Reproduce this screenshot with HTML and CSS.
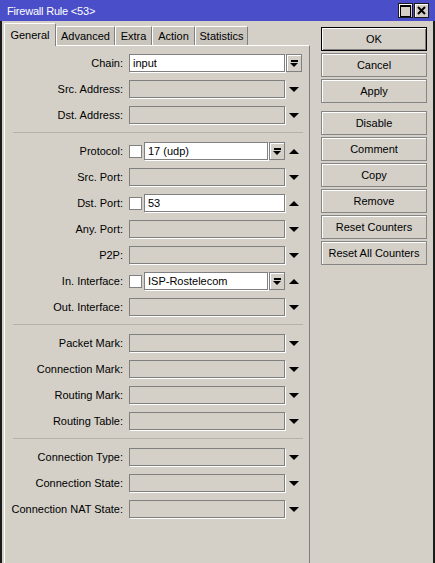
FILE: index.html
```html
<!DOCTYPE html>
<html lang="en">
<head>
    <meta charset="UTF-8">
    <title>Firewall Rule &lt;53&gt;</title>
    <link rel="stylesheet" href="styles.css">
</head>
<body>
    <div class="window">
        <div class="titlebar">
            <span class="title">Firewall Rule &lt;53&gt;</span>
            <div class="title-btns">
                <span class="tbtn tmax"></span>
                <span class="tbtn">
                    <svg width="9" height="9" viewBox="0 0 9 9"><path d="M1 1L8 8M8 1L1 8" stroke="#000" stroke-width="2"/></svg>
                </span>
            </div>
        </div>

        <div class="main">
            <div class="left">
                <div class="tabs">
                    <div class="tab active" style="width:52px">General</div>
                    <div class="tab" style="width:59px">Advanced</div>
                    <div class="tab" style="width:37px">Extra</div>
                    <div class="tab" style="width:43px">Action</div>
                    <div class="tab" style="width:53px">Statistics</div>
                </div>

                <div class="panel">
                    <div class="row">
                        <span class="lbl">Chain:</span>
                        <div class="ctrl"><div class="field on">input</div></div>
                        <div class="tail"><span class="dd"></span></div>
                    </div>
                    <div class="row">
                        <span class="lbl">Src. Address:</span>
                        <div class="ctrl"><div class="field"></div></div>
                        <div class="tail"><span class="down"></span></div>
                    </div>
                    <div class="row">
                        <span class="lbl">Dst. Address:</span>
                        <div class="ctrl"><div class="field"></div></div>
                        <div class="tail"><span class="down"></span></div>
                    </div>

                    <div class="sep"></div>

                    <div class="row">
                        <span class="lbl">Protocol:</span>
                        <div class="ctrl"><span class="chk"></span><div class="field on">17 (udp)</div><span class="dd"></span></div>
                        <div class="tail"><span class="up"></span></div>
                    </div>
                    <div class="row">
                        <span class="lbl">Src. Port:</span>
                        <div class="ctrl"><div class="field"></div></div>
                        <div class="tail"><span class="down"></span></div>
                    </div>
                    <div class="row">
                        <span class="lbl">Dst. Port:</span>
                        <div class="ctrl"><span class="chk"></span><div class="field on">53</div></div>
                        <div class="tail"><span class="up"></span></div>
                    </div>
                    <div class="row">
                        <span class="lbl">Any. Port:</span>
                        <div class="ctrl"><div class="field"></div></div>
                        <div class="tail"><span class="down"></span></div>
                    </div>
                    <div class="row">
                        <span class="lbl">P2P:</span>
                        <div class="ctrl"><div class="field"></div></div>
                        <div class="tail"><span class="down"></span></div>
                    </div>
                    <div class="row">
                        <span class="lbl">In. Interface:</span>
                        <div class="ctrl"><span class="chk"></span><div class="field on">ISP-Rostelecom</div><span class="dd"></span></div>
                        <div class="tail"><span class="up"></span></div>
                    </div>
                    <div class="row">
                        <span class="lbl">Out. Interface:</span>
                        <div class="ctrl"><div class="field"></div></div>
                        <div class="tail"><span class="down"></span></div>
                    </div>

                    <div class="sep"></div>

                    <div class="row">
                        <span class="lbl">Packet Mark:</span>
                        <div class="ctrl"><div class="field"></div></div>
                        <div class="tail"><span class="down"></span></div>
                    </div>
                    <div class="row">
                        <span class="lbl">Connection Mark:</span>
                        <div class="ctrl"><div class="field"></div></div>
                        <div class="tail"><span class="down"></span></div>
                    </div>
                    <div class="row">
                        <span class="lbl">Routing Mark:</span>
                        <div class="ctrl"><div class="field"></div></div>
                        <div class="tail"><span class="down"></span></div>
                    </div>
                    <div class="row">
                        <span class="lbl">Routing Table:</span>
                        <div class="ctrl"><div class="field"></div></div>
                        <div class="tail"><span class="down"></span></div>
                    </div>

                    <div class="sep"></div>

                    <div class="row">
                        <span class="lbl">Connection Type:</span>
                        <div class="ctrl"><div class="field"></div></div>
                        <div class="tail"><span class="down"></span></div>
                    </div>
                    <div class="row">
                        <span class="lbl">Connection State:</span>
                        <div class="ctrl"><div class="field"></div></div>
                        <div class="tail"><span class="down"></span></div>
                    </div>
                    <div class="row">
                        <span class="lbl">Connection NAT State:</span>
                        <div class="ctrl"><div class="field"></div></div>
                        <div class="tail"><span class="down"></span></div>
                    </div>
                </div>
            </div>

            <div class="buttons">
                <div class="btn default">OK</div>
                <div class="btn">Cancel</div>
                <div class="btn">Apply</div>
                <div class="btn spaced">Disable</div>
                <div class="btn">Comment</div>
                <div class="btn">Copy</div>
                <div class="btn">Remove</div>
                <div class="btn">Reset Counters</div>
                <div class="btn">Reset All Counters</div>
            </div>
        </div>
    </div>
</body>
</html>
```

FILE: styles.css
```css
* {
    margin: 0;
    padding: 0;
    box-sizing: border-box;
}

body {
    font-family: "Liberation Sans", Arial, sans-serif;
    font-size: 11px;
    color: #000;
    background: #d4d0c8;
    width: 435px;
    height: 563px;
    overflow: hidden;
}

.window {
    width: 435px;
    height: 563px;
    display: flex;
    flex-direction: column;
}

/* title bar */
.titlebar {
    height: 21px;
    flex: none;
    background: #4a4ec8;
    color: #fff;
    display: flex;
    align-items: center;
    justify-content: space-between;
    padding: 0 6px 0 7px;
}

.title {
    letter-spacing: -0.2px;
}

.title-btns {
    display: flex;
    gap: 1px;
}

.tbtn {
    width: 15px;
    height: 15px;
    background: #d4d0c8;
    border: 1px solid #1a1a1a;
    box-shadow: inset 1px 1px #fff;
    display: flex;
    align-items: center;
    justify-content: center;
}

.tmax::after {
    content: '';
    width: 9px;
    height: 9px;
    border: 1px solid #000;
    border-top-width: 2px;
}

/* main area */
.main {
    flex: 1;
    display: flex;
    border-left: 2px solid #1c1c1c;
    border-right: 2px solid #1c1c1c;
    padding-left: 2px;
}

.left {
    width: 306px;
    display: flex;
    flex-direction: column;
}

.tabs {
    height: 24px;
    padding-top: 2px;
    display: flex;
    align-items: flex-end;
    position: relative;
    z-index: 1;
}

.tab {
    height: 19px;
    background: #c9c5bd;
    border-top: 1px solid #fff;
    border-left: 1px solid #fff;
    border-right: 1px solid #808080;
    display: flex;
    align-items: center;
    justify-content: center;
}

.tab.active {
    height: 23px;
    margin-bottom: -1px;
    background: #d4d0c8;
    padding-bottom: 1px;
}

.panel {
    flex: 1;
    border-top: 1px solid #fff;
    border-left: 1px solid #fff;
    border-right: 1px solid #808080;
    padding-top: 8px;
    display: flex;
    flex-direction: column;
    gap: 8px;
}

.row {
    height: 18px;
    display: flex;
    align-items: center;
}

.lbl {
    width: 118px;
    margin-right: 6px;
    text-align: right;
    white-space: nowrap;
}

.ctrl {
    width: 156px;
    height: 18px;
    display: flex;
    align-items: center;
}

.tail {
    width: 16px;
    height: 18px;
    margin-left: 1px;
    display: flex;
    align-items: center;
    justify-content: center;
}

.field {
    flex: 1;
    height: 18px;
    border: 1px solid #808080;
    box-shadow: 1px 1px 0 #fff;
    background: #d4d0c8;
    padding-left: 3px;
    line-height: 16px;
    white-space: nowrap;
    overflow: hidden;
}

.field.on {
    background: #fff;
}

.chk {
    width: 13px;
    height: 13px;
    flex: none;
    margin-right: 2px;
    background: #fff;
    border: 1px solid #808080;
}

.dd {
    width: 16px;
    height: 18px;
    flex: none;
    background: #d4d0c8;
    border: 1px solid #808080;
    box-shadow: inset 1px 1px #fff;
    display: flex;
    flex-direction: column;
    align-items: center;
    justify-content: center;
    gap: 1px;
}

.ctrl .dd {
    margin-left: 1px;
}

.dd::before {
    content: '';
    width: 7px;
    height: 2px;
    background: #000;
}

.dd::after {
    content: '';
    border-left: 4px solid transparent;
    border-right: 4px solid transparent;
    border-top: 4px solid #000;
}

.down {
    border-left: 5px solid transparent;
    border-right: 5px solid transparent;
    border-top: 5px solid #000;
}

.up {
    border-left: 5px solid transparent;
    border-right: 5px solid transparent;
    border-bottom: 5px solid #000;
}

.sep {
    height: 2px;
    margin: 0 6px 0 8px;
    border-top: 1px solid #b5b1a9;
}

/* right buttons */
.buttons {
    width: 106px;
    margin-left: 11px;
    padding-top: 6px;
    display: flex;
    flex-direction: column;
    gap: 2px;
}

.btn {
    height: 24px;
    background: #d4d0c8;
    border: 1px solid #858585;
    box-shadow: inset 1px 1px #fff;
    display: flex;
    align-items: center;
    justify-content: center;
}

.btn.default {
    border-color: #000;
    box-shadow: inset 1px 1px #fff, inset -1px -1px #808080;
}

.btn.spaced {
    margin-top: 6px;
}
```
